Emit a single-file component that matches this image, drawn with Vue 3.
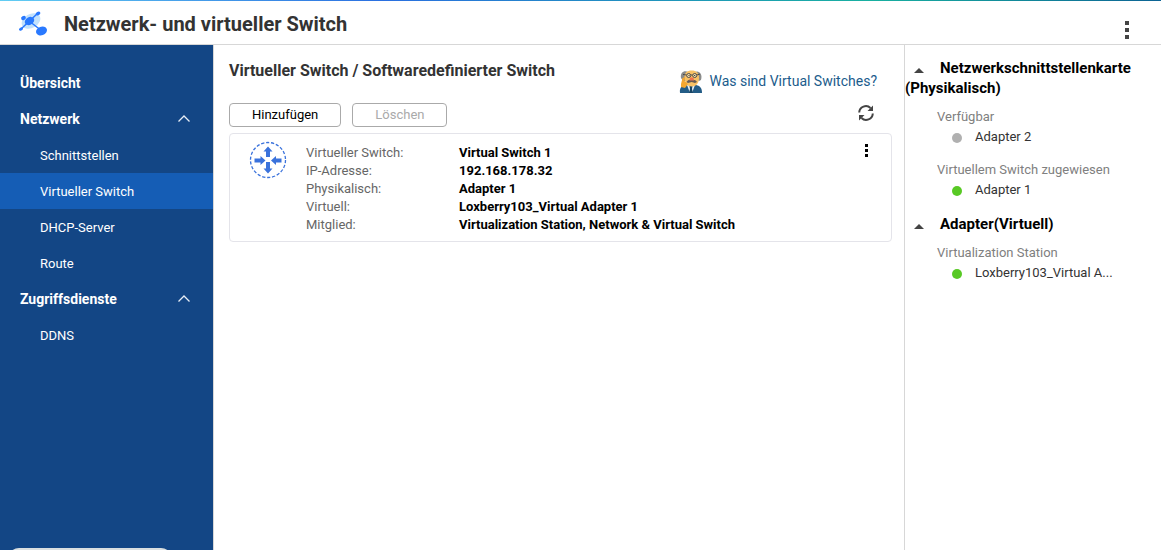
<script setup>
import { ref } from 'vue'

const active = ref('Virtueller Switch')
const menu = ref([
  { title: 'Übersicht', items: [] },
  { title: 'Netzwerk', open: true, items: ['Schnittstellen', 'Virtueller Switch', 'DHCP-Server', 'Route'] },
  { title: 'Zugriffsdienste', open: true, items: ['DDNS'] },
])

const details = [
  ['Virtueller Switch:', 'Virtual Switch 1'],
  ['IP-Adresse:', '192.168.178.32'],
  ['Physikalisch:', 'Adapter 1'],
  ['Virtuell:', 'Loxberry103_Virtual Adapter 1'],
  ['Mitglied:', 'Virtualization Station, Network & Virtual Switch'],
]

const sections = ref([
  {
    title: 'Netzwerkschnittstellenkarte (Physikalisch)',
    open: true,
    groups: [
      { label: 'Verfügbar', adapter: 'Adapter 2', up: false },
      { label: 'Virtuellem Switch zugewiesen', adapter: 'Adapter 1', up: true },
    ],
  },
  {
    title: 'Adapter(Virtuell)',
    open: true,
    groups: [{ label: 'Virtualization Station', adapter: 'Loxberry103_Virtual A...', up: true }],
  },
])
</script>

<template>
  <div class="app">
    <header class="topbar">
      <svg class="logo" width="30" height="26" viewBox="0 0 30 26" aria-hidden="true">
        <ellipse cx="13" cy="10" rx="10" ry="7" transform="rotate(-30 13 10)" fill="#c3e2fc" />
        <path d="M3 18L20 2M11 10L24 20" stroke="#2979ff" stroke-width="1.5" fill="none" />
        <ellipse cx="11.500" cy="10" rx="5" ry="3.800" transform="rotate(-30 11.500 10)" fill="#2979ff" />
        <ellipse cx="5.500" cy="7" rx="2.500" ry="2" transform="rotate(-30 5.500 7)" fill="#2979ff" />
        <ellipse cx="20" cy="2.500" rx="2.400" ry="1.700" transform="rotate(-30 20 2.500)" fill="#2979ff" />
        <ellipse cx="3" cy="18" rx="2.200" ry="1.500" transform="rotate(-30 3 18)" fill="#2979ff" />
        <ellipse cx="23.500" cy="20" rx="5.600" ry="4.200" transform="rotate(-20 23.500 20)" fill="#2979ff" />
      </svg>
      <h1>Netzwerk- und virtueller Switch</h1>
      <button class="dots large" aria-label="Weitere Optionen"><i></i><i></i><i></i></button>
    </header>

    <div class="body">
      <nav class="sidebar">
        <template v-for="group in menu" :key="group.title">
          <button class="group" @click="group.open = !group.open">
            {{ group.title }}
            <svg v-if="group.items.length" :class="{ flipped: !group.open }" width="14" height="8" viewBox="0 0 14 8" aria-hidden="true">
              <path d="M1.500 6.500L7 1L12.500 6.500" fill="none" stroke="#e8eef6" stroke-width="1.300" />
            </svg>
          </button>
          <template v-if="group.open">
            <a v-for="item in group.items" :key="item" href="#" :class="{ active: item === active }" @click.prevent="active = item">{{ item }}</a>
          </template>
        </template>
      </nav>

      <main>
        <div class="heading">
          <h2>Virtueller Switch / Softwaredefinierter Switch</h2>
          <a class="help" href="#">
            <svg width="24" height="24" viewBox="0 0 24 24" aria-hidden="true">
              <path d="M1 24C0 18 4 16 8 16H17C22 17 23 20 23 24Z" fill="#235c86" />
              <path d="M8 16H16L13 24H11Z" fill="#e9f2f8" />
              <path d="M10.500 17H13.500L13 20L14 24H10L11 20Z" fill="#164465" />
              <path d="M2 9C1 4 5 1 9 3L8 12H4ZM16 3C20 1 24 5 22 11L20 12L17 10Z" fill="#8b8c8b" />
              <path d="M5.500 9C5 4 8 1.500 12.700 1.500S20 4 20 9C20 14 17 17.500 12.700 17.500S6 14 5.500 9Z" fill="#f8c266" />
              <path d="M2 15L3.500 9L6 8L5.500 12L9 15L6 19L2 18Z" fill="#f5a72f" />
              <path d="M7.500 13C9 10.500 11 10.500 12.700 11C15 10.500 17 11.500 18 13L16 14L12.700 13L9 14Z" fill="#655b55" />
              <path d="M11 8.500H14.500L15 11.500H10.500Z" fill="#ee744f" />
              <circle cx="9.700" cy="6.500" r="2" fill="#fce2ab" stroke="#4a4a4a" />
              <circle cx="15.700" cy="6.500" r="2" fill="#fce2ab" stroke="#4a4a4a" />
              <path d="M4 5.500L7.500 6M12 6H13.500M18 6L21 5" stroke="#4a4a4a" />
              <path d="M9.500 6.500H10.500M15.200 6.500H16.200" stroke="#222" />
            </svg>
            Was sind Virtual Switches?
          </a>
        </div>

        <div class="toolbar">
          <button class="btn">Hinzufügen</button>
          <button class="btn" disabled>Löschen</button>
          <button class="refresh" aria-label="Aktualisieren">
            <svg width="16" height="16" viewBox="0 0 16 16" aria-hidden="true">
              <path d="M1.200 7.500A6.700 6.700 0 0 1 12.500 3M14.800 8.500A6.700 6.700 0 0 1 3.500 13" fill="none" stroke="#444" stroke-width="2" />
              <path d="M15 0.500V6H9.500ZM1 15.500V10H6.500Z" fill="#444" />
            </svg>
          </button>
        </div>

        <section class="card">
          <svg class="switch" width="38" height="38" viewBox="0 0 38 38" aria-hidden="true">
            <circle cx="19" cy="19" r="17.500" fill="none" stroke="#3a72dc" stroke-width="1.300" stroke-dasharray="3.200 1.800" />
            <path d="M19 5.500L23.500 10.500H21V16H17V10.500H14.500ZM19 32.500L14.500 27.500H17V21H21V27.500H23.500ZM16.500 19.500L11.500 24V21.500H5.500V17.500H11.500V15ZM22 19.500L27 15V17.500H32.500V21.500H27V24Z" fill="#3a72dc" />
          </svg>
          <dl>
            <template v-for="[label, value] in details" :key="label">
              <dt>{{ label }}</dt>
              <dd>{{ value }}</dd>
            </template>
          </dl>
          <button class="dots" aria-label="Aktionen"><i></i><i></i><i></i></button>
        </section>
      </main>

      <aside>
        <section v-for="section in sections" :key="section.title">
          <h3>
            <button @click="section.open = !section.open">
              <svg :class="{ flipped: !section.open }" width="10" height="5" viewBox="0 0 10 5" aria-hidden="true"><path d="M0 5L5 0L10 5Z" fill="#444" /></svg>{{ section.title }}
            </button>
          </h3>
          <template v-if="section.open">
            <div v-for="group in section.groups" :key="group.label" class="adapter-group">
              <p>{{ group.label }}</p>
              <div class="adapter">
                <span class="status" :class="{ up: group.up }"></span>
                <span>{{ group.adapter }}</span>
              </div>
            </div>
          </template>
        </section>
      </aside>
    </div>
    <div class="status-popup"></div>
  </div>
</template>

<style>
body { margin: 0; }
</style>

<style scoped>
* { box-sizing: border-box; }
.app {
  position: relative;
  display: flex;
  flex-direction: column;
  height: 100vh;
  overflow: hidden;
  background: #fff;
  color: #000;
  font: 13px/18px Roboto, "Liberation Sans", sans-serif;
}
h1, h2, h3, p, dl, dd { margin: 0; }
button {
  border: 0;
  padding: 0;
  background: none;
  font: inherit;
  color: inherit;
  cursor: pointer;
}
a { text-decoration: none; }
.flipped { transform: rotate(180deg); }
.topbar {
  display: flex;
  align-items: center;
  flex: none;
  height: 45px;
  padding: 4px 30px 0 18px;
  border-bottom: 1px solid #d7d7d7;
  background: linear-gradient(90deg, #62cdf3, #2a6fe0 33%, #18b0a0 75%, #0c6394) top / 100% 1px no-repeat;
}
.logo { flex: none; margin-right: 16px; }
h1 {
  flex: 1;
  color: #333;
  font-size: 20px;
  line-height: 28px;
  font-weight: 700;
}
.dots {
  display: flex;
  flex-direction: column;
  gap: 2px;
}
.dots i { width: 3px; height: 3px; background: #000; }
.dots.large { gap: 3px; margin-top: 12px; padding: 0 2px; }
.dots.large i { width: 4px; height: 4px; background: #444; }
.body { display: flex; flex: 1; min-height: 0; }
.sidebar {
  display: flex;
  flex-direction: column;
  flex: none;
  width: 213px;
  padding-top: 20px;
  background: #134685;
  color: #fff;
}
.group {
  display: flex;
  align-items: center;
  justify-content: space-between;
  height: 36px;
  padding: 0 22px 2px 20px;
  padding-bottom: 0;
  font-size: 14px;
  font-weight: 700;
}
.sidebar a {
  height: 36px;
  padding-left: 40px;
  color: #fff;
  line-height: 38px;
}
.sidebar a.active { background: #155db5; }
main {
  flex: 1;
  min-width: 0;
  padding: 16px 12px 0 15px;
  border-left: 1px solid #d7d7d7;
}
.heading {
  display: flex;
  justify-content: space-between;
  padding-right: 15px;
}
h2 { color: #333; font-size: 16px; line-height: 20px; font-weight: 700; }
.help {
  display: flex;
  align-items: center;
  gap: 6px;
  margin-top: 8px;
  color: #1b5c8c;
  font-size: 14px;
}
.toolbar { display: flex; gap: 11px; margin-top: 10px; padding-right: 18px; }
.btn {
  height: 24px;
  padding: 0 22px;
  border: 1px solid #aaa;
  border-radius: 4px;
  background: #fff;
}
.btn:disabled { color: #aaa; cursor: default; }
.refresh { display: flex; margin: 2px 0 0 auto; }
.card {
  display: flex;
  align-items: flex-start;
  margin-top: 6px;
  padding: 10px 23px 7px 19px;
  border: 1px solid #e4e4ea;
  border-radius: 4px;
}
.switch { flex: none; margin: -3px 19px 0 0; }
dl {
  display: grid;
  grid-template-columns: 153px 1fr;
  flex: 1;
}
dt { color: #666; }
dd { font-weight: 700; }
.card .dots { margin-top: 0; }
aside {
  flex: none;
  width: 257px;
  padding-top: 13px;
  border-left: 1px solid #d7d7d7;
}
h3 { font-size: 15px; line-height: 20px; font-weight: 700; }
h3 button { display: block; width: 100%; text-align: left; }
h3 svg { margin: 0 16px 0 9px; }
.adapter-group { margin: 9px 0 13px; padding-left: 32px; line-height: 20px; }
.adapter-group:last-child { margin-bottom: 14px; }
.adapter-group p { color: #808080; }
.adapter { display: flex; align-items: center; color: #333; padding-left: 15px; }
.status {
  width: 10px;
  height: 10px;
  margin: 2px 13px 0 0;
  border-radius: 50%;
  background: #b0b0b0;
}
.status.up { background: #58c925; }
.status-popup {
  position: absolute;
  left: 8px;
  bottom: -20px;
  width: 164px;
  height: 22px;
  border-radius: 11px;
  background: #dadfe0;
}
</style>
